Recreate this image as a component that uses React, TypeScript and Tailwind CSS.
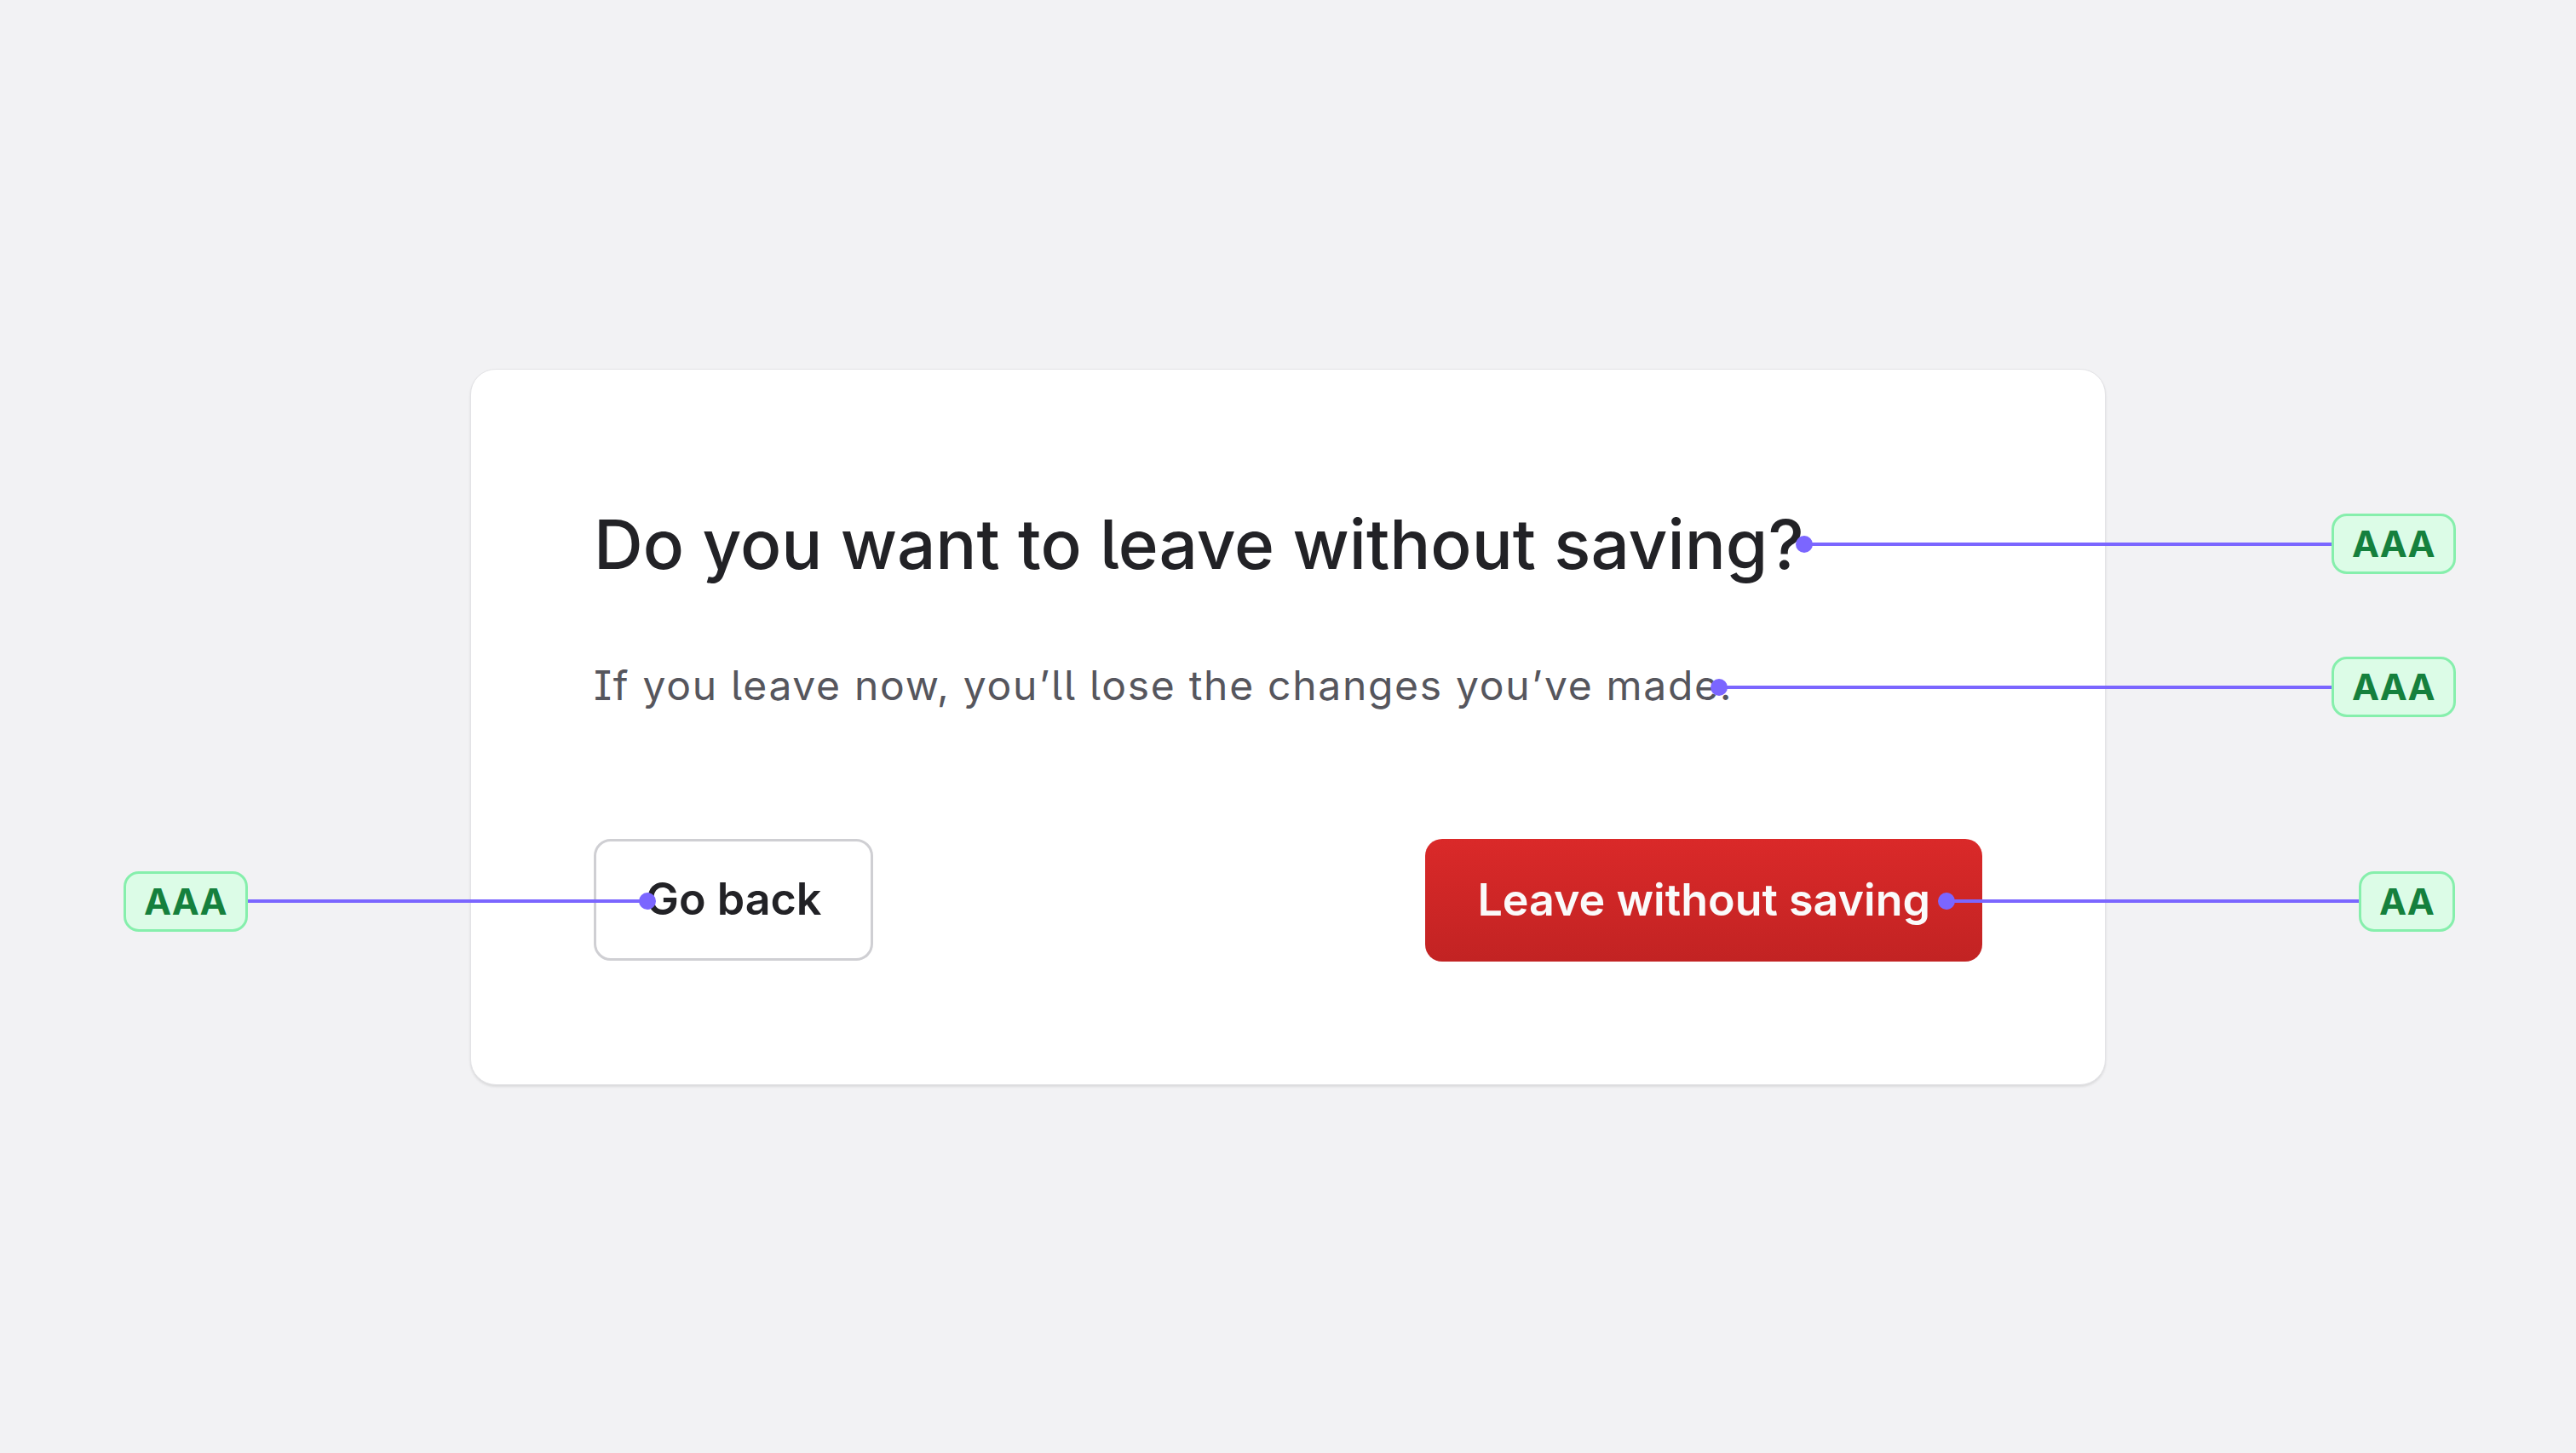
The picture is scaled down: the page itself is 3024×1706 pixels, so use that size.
import React from "react";

function Badge({ label, className }: { label: string; className: string }) {
  return (
    <div
      className={
        "absolute flex items-center justify-center h-[71px] px-[21px] rounded-[18px] border-[3px] border-[#86efac] bg-[#dcfce7] text-[#15803d] text-[43px] font-bold leading-none " +
        className
      }
    >
      {label}
    </div>
  );
}

export default function App() {
  return (
    <div className="relative w-[3024px] h-[1706px] overflow-hidden bg-[#f2f2f4] flex items-center justify-center font-[Inter,sans-serif] [font-feature-settings:'cv05','cv08']">
      <div className="w-[1920px] bg-white border border-[#e3e3e6] rounded-[30px] shadow-[0_2px_3px_rgba(0,0,0,0.10)] px-[144px] pt-[157px] pb-[144px]">
        <h1 className="text-[80px] leading-[96px] font-medium text-[#222226]">
          Do you want to leave without saving?
        </h1>
        <p className="mt-[82px] text-[48px] leading-[72px] tracking-[1.7px] text-[#56565d]">
          If you leave now, you’ll lose the changes you’ve made.
        </p>
        <div className="mt-[144px] flex items-start justify-between">
          <button className="h-[143px] px-[58px] border-[3px] border-[#cfcfd3] rounded-[20px] bg-white text-[52px] font-semibold text-[#222226]">
            Go back
          </button>
          <button className="h-[144px] px-[61px] rounded-[20px] bg-linear-to-b from-[#da2929] to-[#c22323] text-[52px] font-semibold text-[#fafafa]">
            Leave without saving
          </button>
        </div>
      </div>

      <svg className="absolute inset-0 pointer-events-none" width="3024" height="1706" viewBox="0 0 3024 1706">
        <g stroke="#7b66ff" strokeWidth="4">
          <line x1="2118" y1="639" x2="2740" y2="639" />
          <line x1="2018" y1="807" x2="2740" y2="807" />
          <line x1="284" y1="1058" x2="760" y2="1058" />
          <line x1="2285" y1="1058" x2="2772" y2="1058" />
        </g>
        <g fill="#7b66ff">
          <circle cx="2118" cy="639" r="10" />
          <circle cx="2018" cy="807" r="10" />
          <circle cx="760" cy="1058" r="10" />
          <circle cx="2285" cy="1058" r="10" />
        </g>
      </svg>

      <Badge label="AAA" className="left-[2737px] top-[603px]" />
      <Badge label="AAA" className="left-[2737px] top-[771px]" />
      <Badge label="AAA" className="left-[145px] top-[1023px]" />
      <Badge label="AA" className="left-[2769px] top-[1023px]" />
    </div>
  );
}
